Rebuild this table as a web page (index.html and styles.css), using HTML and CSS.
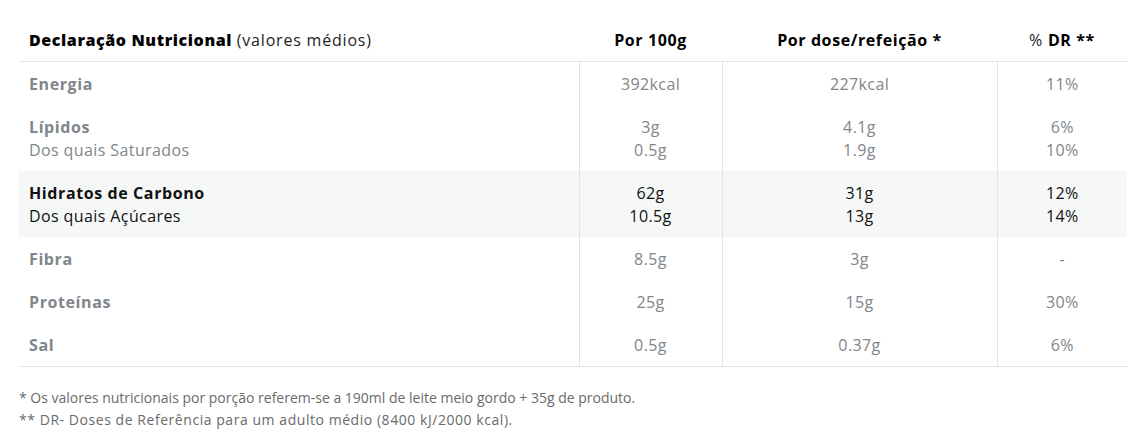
FILE: index.html
```html
<!DOCTYPE html>
<html lang="pt">
<head>
<meta charset="utf-8">
<title>Declaração Nutricional</title>
<link rel="stylesheet" href="styles.css">
</head>
<body>
<div class="wrap">
  <table class="nutri">
    <colgroup>
      <col class="c-label">
      <col class="c-100">
      <col class="c-dose">
      <col class="c-dr">
    </colgroup>
    <thead>
      <tr>
        <th class="lbl"><strong>Declaração Nutricional</strong> <span class="light">(valores médios)</span></th>
        <th>Por 100g</th>
        <th>Por dose/refeição *</th>
        <th><span class="light">%</span> DR **</th>
      </tr>
    </thead>
    <tbody>
      <tr>
        <td class="lbl"><b>Energia</b></td>
        <td>392kcal</td>
        <td>227kcal</td>
        <td>11%</td>
      </tr>
      <tr>
        <td class="lbl"><b>Lípidos</b><br>Dos quais Saturados</td>
        <td>3g<br>0.5g</td>
        <td>4.1g<br>1.9g</td>
        <td>6%<br>10%</td>
      </tr>
      <tr class="hl">
        <td class="lbl"><b>Hidratos de Carbono</b><br>Dos quais Açúcares</td>
        <td>62g<br>10.5g</td>
        <td>31g<br>13g</td>
        <td>12%<br>14%</td>
      </tr>
      <tr>
        <td class="lbl"><b>Fibra</b></td>
        <td>8.5g</td>
        <td>3g</td>
        <td>-</td>
      </tr>
      <tr>
        <td class="lbl"><b>Proteínas</b></td>
        <td>25g</td>
        <td>15g</td>
        <td>30%</td>
      </tr>
      <tr>
        <td class="lbl"><b>Sal</b></td>
        <td>0.5g</td>
        <td>0.37g</td>
        <td>6%</td>
      </tr>
    </tbody>
  </table>
  <div class="notes">
    <p>* Os valores nutricionais por porção referem-se a 190ml de leite meio gordo + 35g de produto.</p>
    <p class="wide">** DR- Doses de Referência para um adulto médio (8400 kJ/2000 kcal).</p>
  </div>
</div>
</body>
</html>
```

FILE: styles.css
```css
html, body {
  margin: 0;
  padding: 0;
  background: #ffffff;
}
body {
  font-family: "Open Sans", "Noto Sans", "Liberation Sans", sans-serif;
  font-size: 16px;
  letter-spacing: 0.4px;
  color: #80868b;
}
.wrap {
  padding: 18px 19px 0 19px;
}
.nutri {
  width: 1108px;
  border-collapse: collapse;
  table-layout: fixed;
}
.c-label { width: 560px; }
.c-100 { width: 143px; }
.c-dose { width: 275px; }
.c-dr { width: 130px; }

.nutri th {
  font-weight: 700;
  letter-spacing: 0.6px;
  color: #000;
  text-align: center;
  line-height: 23px;
  padding: 11px 0 9px;
  border-bottom: 1px solid #e3e3e3;
}
.nutri th.lbl {
  text-align: left;
  padding-left: 10px;
}
.nutri th .light {
  font-weight: 400;
  letter-spacing: 0.8px;
  color: #222;
}
.nutri td {
  text-align: center;
  line-height: 23px;
  padding: 11px 0 9px;
  vertical-align: top;
  border-left: 1px solid #e3e3e3;
}
.nutri td.lbl {
  text-align: left;
  padding-left: 10px;
  border-left: none;
}
.nutri td b {
  font-weight: 700;
  letter-spacing: 0.6px;
}
.nutri tbody tr:last-child td {
  border-bottom: 1px solid #e3e3e3;
}
.nutri tr.hl td {
  background: #f6f8f8;
  color: #111;
}
.notes {
  margin-top: 20px;
  font-size: 14px;
  letter-spacing: 0;
  color: #6a6a6a;
  line-height: 22px;
}
.notes p {
  margin: 0;
}
.notes p.wide {
  letter-spacing: 0.55px;
}
```
